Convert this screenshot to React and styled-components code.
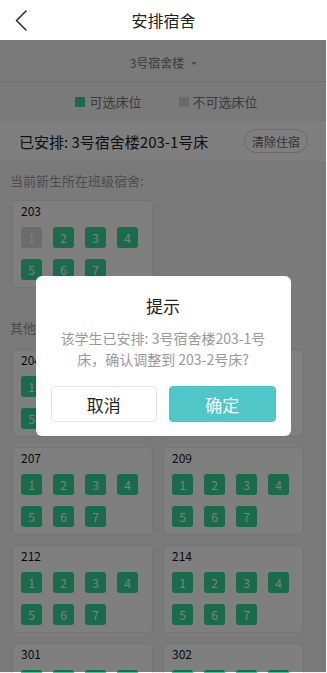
import React from "react";
import styled, { createGlobalStyle } from "styled-components";

const Global = createGlobalStyle`
  html, body { margin: 0; padding: 0; }
  body {
    background: #f4f4f4;
    font-family: "Noto Sans CJK SC", "Noto Sans", sans-serif;
    color: #222;
  }
  * { box-sizing: border-box; }
`;

const Page = styled.div`
  min-height: 100vh;
  background: #f4f4f4;
  padding-bottom: 40px;
`;

const Header = styled.header`
  position: relative;
  z-index: 10;
  height: 40px;
  background: #fff;
  display: grid;
  grid-template-columns: 44px 1fr 44px;
  align-items: center;
`;

const BackBtn = styled.button`
  border: 0;
  background: none;
  padding: 0 0 0 15px;
  height: 40px;
  display: flex;
  align-items: center;
`;

const Title = styled.h1`
  margin: 0;
  text-align: center;
  font-size: 16px;
  font-weight: 400;
  color: #222;
`;

const Selector = styled.div`
  height: 42px;
  padding-top: 3px;
  display: flex;
  align-items: center;
  justify-content: center;
  gap: 7px;
  font-size: 12px;
  color: #777;
  border-bottom: 1px solid #e2e2e2;
`;

const Caret = styled.span`
  width: 0;
  height: 0;
  border-left: 3px solid transparent;
  border-right: 3px solid transparent;
  border-top: 3px solid #999;
  margin-top: 2px;
`;

const Legend = styled.div`
  height: 39px;
  display: flex;
  align-items: center;
  justify-content: center;
  gap: 37px;
  padding-left: 6px;
  font-size: 13px;
  color: #777;
`;

const LegendItem = styled.div`
  display: flex;
  align-items: center;
  gap: 4px;
`;

const Swatch = styled.span`
  width: 10px;
  height: 10px;
  background: ${(p) => (p.$on ? "#34d49a" : "#d4d4d4")};
`;

const Arranged = styled.div`
  height: 40px;
  background: #fff;
  display: flex;
  align-items: center;
  justify-content: space-between;
  padding: 0 19px;
  font-size: 15px;
  color: #222;
`;

const ClearBtn = styled.button`
  height: 24px;
  padding: 0 7px;
  border: 1px solid #d5d5d5;
  border-radius: 12px;
  background: #fff;
  font-family: inherit;
  font-size: 12px;
  color: #666;
`;

const SectionLabel = styled.div`
  padding: ${(p) => p.$pad};
  font-size: 13px;
  line-height: 20px;
  color: #999;
`;

const Grid = styled.div`
  display: grid;
  grid-template-columns: 141px 141px;
  gap: 10px;
  padding: 0 12px;
`;

const Card = styled.div`
  height: 88px;
  background: #fff;
  border: 1px solid #e6e6e6;
  border-radius: 5px;
  padding: 0 8px;
`;

const RoomNo = styled.div`
  font-size: 12px;
  line-height: 20px;
  color: #111;
  margin-bottom: 6px;
`;

const Beds = styled.div`
  display: grid;
  grid-template-columns: repeat(4, 21px);
  gap: 11px;
`;

const Bed = styled.span`
  width: 21px;
  height: 21px;
  border-radius: 3px;
  background: ${(p) => (p.$off ? "#d8d8d8" : "#34d49a")};
  color: #fff;
  font-size: 12px;
  display: flex;
  align-items: center;
  justify-content: center;
`;

const Overlay = styled.div`
  position: fixed;
  z-index: 5;
  top: 40px;
  left: 0;
  right: 1px;
  bottom: 1px;
  background: rgba(0, 0, 0, 0.5);
  display: flex;
  align-items: center;
  justify-content: center;
`;

const Dialog = styled.div`
  width: 255px;
  background: #fff;
  border-radius: 6px;
  padding: 18px 15px 14px;
  text-align: center;
`;

const DialogTitle = styled.div`
  font-size: 17px;
  line-height: 24px;
  color: #222;
`;

const DialogText = styled.div`
  margin-top: 10px;
  font-size: 14px;
  line-height: 21px;
  color: #999;
`;

const Actions = styled.div`
  margin-top: 16px;
  display: grid;
  grid-template-columns: 1fr 1fr;
  gap: 12px;
`;

const ActionBtn = styled.button`
  height: 36px;
  border-radius: 4px;
  font-family: inherit;
  font-size: 17px;
  border: 1px solid ${(p) => (p.$primary ? "#50c6c8" : "#e6e6e6")};
  background: ${(p) => (p.$primary ? "#50c6c8" : "#fff")};
  color: ${(p) => (p.$primary ? "#fff" : "#222")};
`;

const beds = [1, 2, 3, 4, 5, 6, 7];

function Room({ no, off = [] }) {
  return (
    <Card>
      <RoomNo>{no}</RoomNo>
      <Beds>
        {beds.map((b) => (
          <Bed key={b} $off={off.includes(b)}>
            {b}
          </Bed>
        ))}
      </Beds>
    </Card>
  );
}

const others = ["204", "205", "207", "209", "212", "214", "301", "302", "303", "305"];

export default function App() {
  return (
    <>
      <Global />
      <Page>
        <Header>
          <BackBtn aria-label="返回">
            <svg width="12" height="21" viewBox="0 0 12 21" fill="none">
              <polyline
                points="11,1 1.5,10.5 11,20"
                stroke="#333"
                strokeWidth="1.6"
                strokeLinecap="round"
                strokeLinejoin="round"
              />
            </svg>
          </BackBtn>
          <Title>安排宿舍</Title>
          <span />
        </Header>
        <Selector>
          3号宿舍楼
          <Caret />
        </Selector>
        <Legend>
          <LegendItem>
            <Swatch $on />
            可选床位
          </LegendItem>
          <LegendItem>
            <Swatch />
            不可选床位
          </LegendItem>
        </Legend>
        <Arranged>
          <span>已安排: 3号宿舍楼203-1号床</span>
          <ClearBtn>清除住宿</ClearBtn>
        </Arranged>
        <SectionLabel $pad="10px 10px 9px">当前新生所在班级宿舍:</SectionLabel>
        <Grid>
          <Room no="203" off={[1]} />
        </Grid>
        <SectionLabel $pad="30px 10px 11px">其他宿舍:</SectionLabel>
        <Grid>
          {others.map((n) => (
            <Room key={n} no={n} />
          ))}
        </Grid>
      </Page>
      <Overlay>
        <Dialog>
          <DialogTitle>提示</DialogTitle>
          <DialogText>
            该学生已安排: 3号宿舍楼203-1号
            <br />
            床，确认调整到 203-2号床?
          </DialogText>
          <Actions>
            <ActionBtn>取消</ActionBtn>
            <ActionBtn $primary>确定</ActionBtn>
          </Actions>
        </Dialog>
      </Overlay>
    </>
  );
}
